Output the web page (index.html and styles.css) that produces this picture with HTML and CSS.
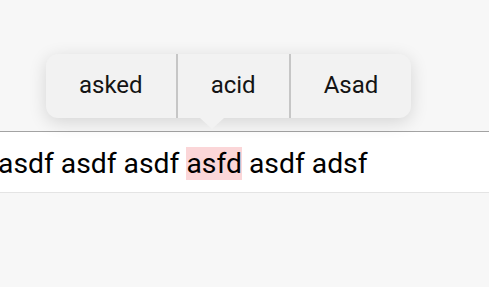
FILE: index.html
```html
<!DOCTYPE html>
<html lang="en">
<head>
    <meta charset="UTF-8">
    <meta name="viewport" content="width=device-width, initial-scale=1.0">
    <title>Spelling suggestions</title>
    <link rel="stylesheet" href="styles.css">
</head>
<body>
    <div id="editor">
        <div id="suggestions">
            <div class="suggestion">asked</div>
            <div class="suggestion">acid</div>
            <div class="suggestion">Asad</div>
            <div class="arrow"></div>
        </div>
        <div id="text-row">asdf asdf asdf <span class="misspelled">asfd</span> asdf adsf</div>
    </div>
</body>
</html>
```

FILE: styles.css
```css
body {
    margin: 0;
    padding: 0;
    background-color: #f7f7f7;
    font-family: Roboto, "Liberation Sans", sans-serif;
    color: #000000;
    overflow: hidden;
}
#editor {
    position: relative;
    padding-top: 130px;
}
#suggestions {
    position: absolute;
    left: 46px;
    top: 54px;
    height: 64px;
    display: flex;
    background-color: #f2f2f2;
    border-radius: 12px;
    box-shadow: 0 4px 18px rgba(0, 0, 0, 0.14);
}
.suggestion {
    padding: 0 33px;
    font-size: 24px;
    line-height: 62px;
    color: #141414;
}
.suggestion + .suggestion {
    border-left: 2px solid #c6c6c6;
}
.arrow {
    position: absolute;
    left: 154px;
    top: 64px;
    width: 0;
    height: 0;
    border-left: 12px solid transparent;
    border-right: 12px solid transparent;
    border-top: 11px solid #f2f2f2;
}
#text-row {
    background-color: #ffffff;
    border-top: 1px solid #a3a3a3;
    border-bottom: 1px solid #e4e4e4;
    padding-top: 4px;
    margin-top: 1px;
    height: 56px;
    line-height: 55px;
    font-size: 28.3px;
    white-space: nowrap;
    margin-left: -2px;
}
.misspelled {
    background-color: #fbd6d8;
}
```
